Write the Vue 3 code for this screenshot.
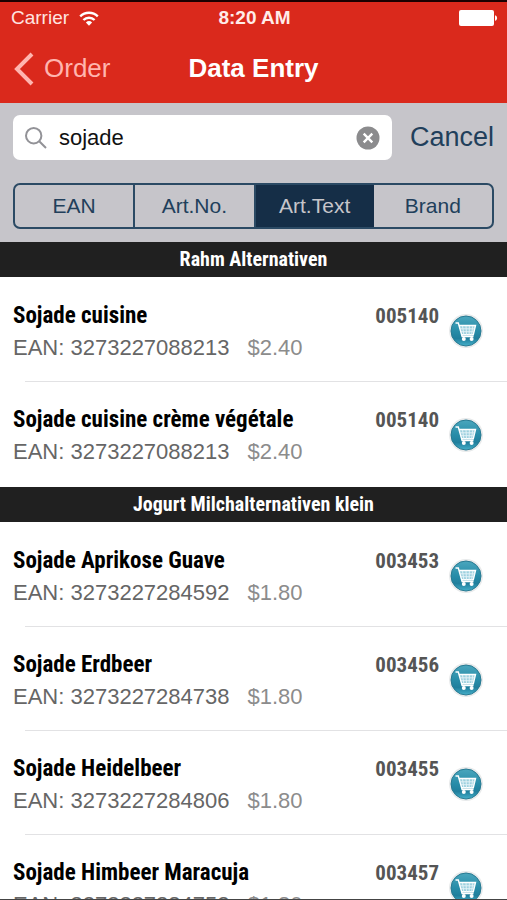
<template>
  <div class="screen">
    <header class="top">
      <div class="status-bar">
        <div class="carrier">
          <span>Carrier</span>
          <svg class="wifi" viewBox="0 0 20 15" aria-hidden="true">
            <path d="M1.2 5.4a12.6 12.6 0 0 1 17.6 0" />
            <path d="M4.4 9a8 8 0 0 1 11.2 0" />
            <path class="dot" d="M6.9 11.4a4.5 4.5 0 0 1 6.2 0L10 14.8z" />
          </svg>
        </div>
        <span class="time">8:20 AM</span>
        <svg class="battery" viewBox="0 0 39 16" aria-hidden="true">
          <rect x="0" y="0" width="35" height="16" rx="2" />
          <path d="M36 5.2c2.8.8 2.8 4.8 0 5.6z" />
        </svg>
      </div>
      <nav class="nav-bar">
        <a href="#order" class="back">
          <svg viewBox="0 0 20 34" aria-hidden="true">
            <path d="M18 2 3 17l15 15" />
          </svg>
          <span>Order</span>
        </a>
        <h1>Data Entry</h1>
      </nav>
    </header>

    <section class="search-panel">
      <form class="search-row" @submit.prevent>
        <div class="search-box">
          <svg class="magnifier" viewBox="0 0 22 22" aria-hidden="true">
            <circle cx="8.7" cy="8.7" r="7.7" />
            <path d="M14.2 14.2 21 21" />
          </svg>
          <input v-model="query" type="text" aria-label="Search" />
          <button type="button" class="clear" aria-label="Clear" @click="query = ''">
            <svg viewBox="0 0 24 24" aria-hidden="true">
              <circle cx="12" cy="12" r="11.5" />
              <path d="m7.7 7.7 8.6 8.6m0-8.6-8.6 8.6" />
            </svg>
          </button>
        </div>
        <button type="button" class="cancel">Cancel</button>
      </form>
      <div class="segments">
        <button
          v-for="scope in scopes"
          :key="scope"
          type="button"
          :class="{ active: scope === currentScope }"
          :aria-pressed="scope === currentScope"
          @click="currentScope = scope"
        >{{ scope }}</button>
      </div>
    </section>

    <main class="results">
      <section v-for="group in groups" :key="group.title">
        <h2>{{ group.title }}</h2>
        <ul>
          <li v-for="item in group.items" :key="item.name">
            <div class="info">
              <h3>{{ item.name }}</h3>
              <p>EAN: {{ item.ean }}<span class="price">{{ item.price }}</span></p>
            </div>
            <span class="number">{{ item.number }}</span>
            <button type="button" class="cart" :aria-label="'Add ' + item.name">
              <svg viewBox="0 0 34 34" aria-hidden="true">
                <defs>
                  <linearGradient id="ball" x1="0" y1="0" x2="0" y2="1">
                    <stop offset="0" stop-color="#4aa6bd" />
                    <stop offset="0.5" stop-color="#278ca8" />
                    <stop offset="0.75" stop-color="#207f9d" />
                    <stop offset="1" stop-color="#45b0ca" />
                  </linearGradient>
                </defs>
                <circle cx="17" cy="17" r="17" fill="#e8eaeb" />
                <circle cx="17" cy="17" r="15" fill="url(#ball)" stroke="#287a92" />
                <path class="basket" d="M10.2 11.5h16.3l-2.2 9.2H12.4z" />
                <path class="frame" d="M6.5 9h2.8l3.8 13.5h11.4M10.2 11.5h16.3l-2.2 9.2H12.6" />
                <path class="grid" d="m13.5 12 1.3 8.7M17 12l.5 8.7M20.4 12l-.3 8.7M23.8 12l-1.2 8.7M11 14.8h14.8M11.8 17.7H25" />
                <circle cx="14.8" cy="25" r="2" fill="#fff" />
                <circle cx="22.6" cy="25" r="2" fill="#fff" />
              </svg>
            </button>
          </li>
        </ul>
      </section>
    </main>
  </div>
</template>

<script setup>
import { ref } from 'vue'

const query = ref('sojade')
const scopes = ['EAN', 'Art.No.', 'Art.Text', 'Brand']
const currentScope = ref('Art.Text')

const groups = [
  {
    title: 'Rahm Alternativen',
    items: [
      { name: 'Sojade cuisine', ean: '3273227088213', price: '$2.40', number: '005140' },
      { name: 'Sojade cuisine crème végétale', ean: '3273227088213', price: '$2.40', number: '005140' }
    ]
  },
  {
    title: 'Jogurt Milchalternativen klein',
    items: [
      { name: 'Sojade Aprikose Guave', ean: '3273227284592', price: '$1.80', number: '003453' },
      { name: 'Sojade Erdbeer', ean: '3273227284738', price: '$1.80', number: '003456' },
      { name: 'Sojade Heidelbeer', ean: '3273227284806', price: '$1.80', number: '003455' },
      { name: 'Sojade Himbeer Maracuja', ean: '3273227284752', price: '$1.80', number: '003457' }
    ]
  }
]
</script>

<style>
body {
  margin: 0;
}
</style>

<style scoped>
.screen {
  display: flex;
  flex-direction: column;
  box-sizing: border-box;
  height: 100vh;
  border-top: 2px solid #1a0000;
  border-bottom: 1px solid #444;
  background: #fff;
  font-family: "Liberation Sans", Arial, sans-serif;
}

h1,
h2,
h3,
p,
ul {
  margin: 0;
  padding: 0;
}

button {
  padding: 0;
  border: 0;
  background: none;
  font-family: inherit;
  color: inherit;
  cursor: pointer;
}

svg {
  display: block;
  fill: none;
}

.top {
  flex: none;
  background: #da291c;
  color: #fff;
}

.status-bar {
  display: grid;
  grid-template-columns: 1fr auto 1fr;
  align-items: center;
  height: 32px;
  padding: 0 9px 0 11px;
  font-size: 19px;
}

.carrier {
  display: flex;
  align-items: center;
  gap: 10px;
  color: #ffe5e1;
}

.wifi {
  width: 20px;
  height: 15px;
  stroke: #fff;
  stroke-width: 2.4;
}

.wifi .dot {
  fill: #fff;
  stroke: none;
}

.time {
  font-weight: 700;
  color: #ffece9;
}

.battery {
  justify-self: end;
  width: 39px;
  height: 16px;
  fill: #fff;
}

.nav-bar {
  display: grid;
  grid-template-columns: 1fr auto 1fr;
  align-items: center;
  height: 69px;
  padding: 0 14px;
}

.back {
  display: flex;
  align-items: center;
  gap: 10px;
  color: #ffb5af;
  font-size: 26px;
  text-decoration: none;
}

.back svg {
  width: 20px;
  height: 34px;
  stroke: currentColor;
  stroke-width: 4;
}

h1 {
  font-size: 26px;
}

.search-panel {
  display: flex;
  flex: none;
  flex-direction: column;
  gap: 23px;
  padding: 12px 13px 13px;
  background: #c6c5ca;
  color: #213f5b;
}

.search-row {
  display: flex;
  align-items: center;
  gap: 18px;
}

.search-box {
  display: flex;
  flex: 1;
  align-items: center;
  min-width: 0;
  height: 45px;
  padding: 0 12px;
  box-sizing: border-box;
  border-radius: 7px;
  background: #fff;
}

.magnifier {
  flex: none;
  width: 22px;
  height: 22px;
  stroke: #929297;
  stroke-width: 2;
}

.search-box input {
  flex: 1;
  min-width: 0;
  padding: 0 12px;
  border: 0;
  outline: 0;
  background: none;
  color: #111;
  font-family: inherit;
  font-size: 22px;
}

.clear svg {
  width: 24px;
  height: 24px;
  stroke: #fff;
  stroke-width: 2.4;
}

.clear circle {
  fill: #8b8b8d;
  stroke: none;
}

.cancel {
  font-size: 27px;
}

.segments {
  display: flex;
  height: 46px;
  box-sizing: border-box;
  overflow: hidden;
  border: 2px solid #2b4a64;
  border-radius: 7px;
}

.segments button {
  flex: 1;
  font-size: 21px;
}

.segments button + button {
  border-left: 2px solid #2b4a64;
}

.segments .active + button {
  border-left: 0;
}

.segments .active {
  background: #152e47;
  color: #c6c5ca;
}

.results {
  flex: 1;
  min-height: 0;
  overflow: auto;
  scrollbar-width: none;
}

h2,
h3,
.number {
  font-family: "Roboto Condensed", "Liberation Sans", sans-serif;
  font-weight: 700;
}

h2 {
  height: 35px;
  background: #202020;
  color: #fff;
  font-size: 20px;
  line-height: 35px;
  text-align: center;
}

ul {
  padding: 1px 0;
  list-style: none;
}

li {
  display: flex;
  align-items: flex-start;
  height: 104px;
  padding: 24px 24px 0 13px;
  box-sizing: border-box;
  background: linear-gradient(#e2e2e4, #e2e2e4) 25px 100% / 100% 1px no-repeat;
}

li:last-child {
  background: none;
}

.info {
  flex: 1;
  min-width: 0;
}

h3,
.number {
  line-height: 28px;
}

h3 {
  color: #000;
  font-size: 23px;
}

.info p {
  margin-top: 4px;
  color: #666;
  font-size: 22px;
  line-height: 28px;
}

.price {
  margin-left: 18px;
  color: #8c8c8c;
}

.number {
  color: #555;
  font-size: 21px;
}

.cart {
  margin: 12px 0 0 10px;
}

.cart svg {
  width: 34px;
  height: 34px;
}

.basket {
  fill: #9dd0de;
}

.frame {
  stroke: #fff;
  stroke-width: 1.4;
}

.grid {
  stroke: #e4f4f8;
  stroke-width: 0.9;
}
</style>
